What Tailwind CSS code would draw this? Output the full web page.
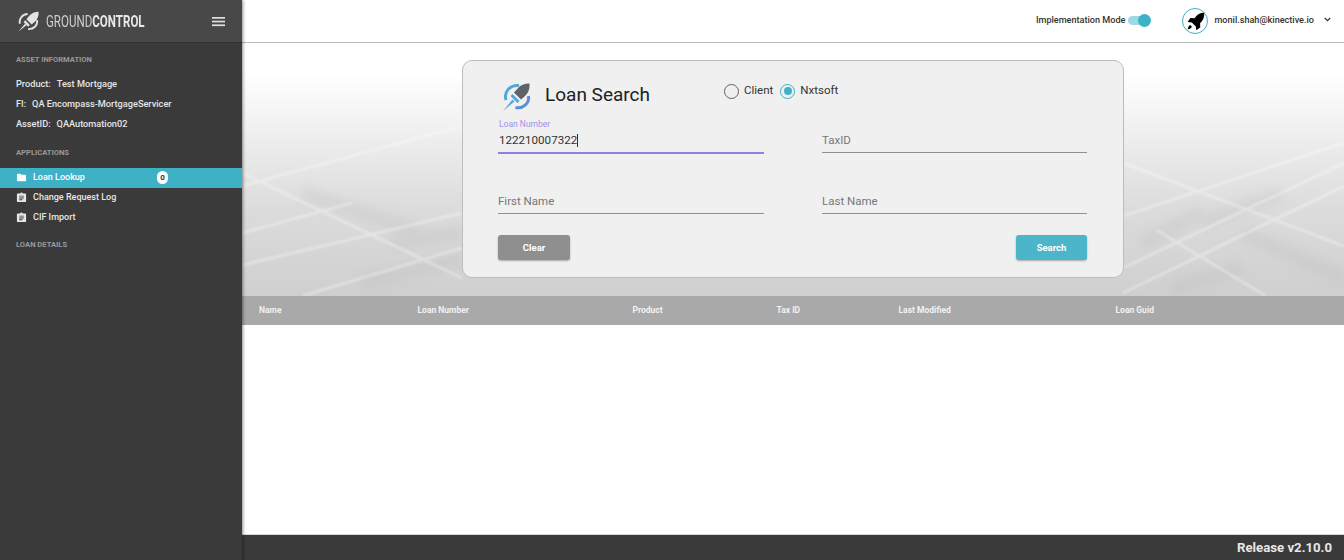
<!DOCTYPE html>
<html lang="en">
<head>
  <meta charset="UTF-8" />
  <title>Loan Search</title>
  <script src="https://cdn.jsdelivr.net/npm/@tailwindcss/browser@4"></script>
</head>
<body class="font-['Roboto',sans-serif] bg-white overflow-hidden">
<div class="flex h-[560px] w-[1344px]">

  <!-- Sidebar -->
  <aside class="w-[242px] shrink-0 bg-[#3a3a3a] text-[#e6e6e6] shadow-[1px_0_3px_rgba(0,0,0,0.45)] z-10">
    <div class="h-[43px] bg-[#484848] border-b border-[#303030] flex items-center pl-[18px] pr-[17px]">
      <svg class="w-[21px] h-[21px] mr-[7px] shrink-0" viewBox="0 0 24 24" fill="#e4e4e4">
        <path d="M23.5 .8c.3 4.600-1 8.600-4.300 11.600l-3.600 3-6-6 3-3.600C15.400 2.500 19.200 .8 23.500 .8z"/>
        <path d="M8.300 10.700 13.500 16l-1.900 1.900-5.300-5.300zM.5 23.500l7.500-8.800 1.600 1.600z"/>
        <path fill="none" stroke="#e4e4e4" stroke-width="2.200" d="M2.200 14.500C.8 9.300 4.800 3.700 11 3.500M21.800 10.500c1 6-4 10.700-10.300 10.200"/>
      </svg>
      <span class="block w-[100px] whitespace-nowrap origin-left scale-x-[0.68] text-[17px] text-[#cfcfcf] leading-none">GROUND<b class="font-bold text-[#e8e8e8]">CONTROL</b></span>
      <svg class="ml-auto w-[13px] h-[11px]" viewBox="0 0 13 11" fill="#e0e0e0">
        <rect y="1" width="13" height="1.700"/><rect y="4.700" width="13" height="1.700"/><rect y="8.400" width="13" height="1.700"/>
      </svg>
    </div>

    <p class="mt-[11px] pl-4 text-[7.600px] leading-[12px] font-bold text-[#999999]">ASSET INFORMATION</p>
    <div class="mt-[8px] pl-4 text-[9.200px] font-medium">
      <p class="h-5 leading-[20px]"><span class="mr-[6px]">Product:</span>Test Mortgage</p>
      <p class="h-5 leading-[20px]"><span class="mr-[6px]">FI:</span>QA Encompass-MortgageServicer</p>
      <p class="h-5 leading-[20px]"><span class="mr-[6px]">AssetID:</span>QAAutomation02</p>
    </div>

    <p class="mt-[13px] pl-4 text-[7.600px] leading-[12px] font-bold text-[#999999]">APPLICATIONS</p>
    <ul class="mt-[9px] text-[9px] font-medium">
      <li class="h-5 bg-[#3fb1c6] text-white flex items-center pl-4 relative">
        <svg class="w-[11px] h-[11px] mr-[6px] -mt-[2px]" viewBox="0 0 24 24" fill="#fff"><path d="M10 4H4a2 2 0 0 0-2 2v12a2 2 0 0 0 2 2h16a2 2 0 0 0 2-2V8a2 2 0 0 0-2-2h-8z"/></svg>
        Loan Lookup
        <span class="absolute left-[157px] top-[3px] w-[11px] h-[13px] rounded-full bg-white text-[#333] text-[8px] font-bold flex items-center justify-center">0</span>
      </li>
      <li class="h-5 flex items-center pl-4">
        <svg class="w-[11px] h-[11px] mr-[6px] -mt-[2px]" viewBox="0 0 24 24" fill="#e6e6e6"><path fill-rule="evenodd" d="M20 3h-5.200C14.400 1.800 13.300 1 12 1s-2.400.8-2.800 2H4a2 2 0 0 0-2 2v15a2 2 0 0 0 2 2h16a2 2 0 0 0 2-2V5a2 2 0 0 0-2-2zM7 8h10v2H7zm0 4h10v2H7zm0 4h7v2H7z"/></svg>
        Change Request Log
      </li>
      <li class="h-5 flex items-center pl-4">
        <svg class="w-[11px] h-[11px] mr-[6px] -mt-[2px]" viewBox="0 0 24 24" fill="#e6e6e6"><path fill-rule="evenodd" d="M20 3h-5.200C14.400 1.800 13.300 1 12 1s-2.400.8-2.800 2H4a2 2 0 0 0-2 2v15a2 2 0 0 0 2 2h16a2 2 0 0 0 2-2V5a2 2 0 0 0-2-2zM7 8h10v2H7zm0 4h10v2H7zm0 4h7v2H7z"/></svg>
        CIF Import
      </li>
    </ul>
    <p class="mt-[11px] pl-4 text-[7.600px] leading-[12px] font-bold text-[#999999]">LOAN DETAILS</p>
  </aside>

  <!-- Main -->
  <main class="flex-1 min-w-0 flex flex-col">
    <header class="h-[43px] bg-white border-b border-[#bdbdbd] flex items-center justify-end text-[9.100px] text-[#333] font-medium">
      <span>Implementation Mode</span>
      <span class="relative ml-[3px] w-[23px] h-[14px] mr-[31px] block">
        <span class="absolute left-0 top-[2px] w-[20px] h-[9px] rounded-full bg-[#9fd8e3]"></span>
        <span class="absolute right-0 top-0 w-[13px] h-[13px] rounded-full bg-[#3fb1c6]"></span>
      </span>
      <span class="w-[26px] h-[26px] rounded-full border border-[#3fb1c6] bg-white flex items-center justify-center mr-[6px]">
        <svg class="w-[19px] h-[19px]" viewBox="0 0 24 24" fill="#000">
          <path d="M23 1c.4 5.500-1.400 10-5.200 13.200l.2 5.300-5 3.500-.6-4.700-5-5L2 12.600l3.500-5 5.300.2C14 3 18 1.200 23 1z"/>
          <path d="M5.500 16.500c-1.800.8-2.800 2.500-3.500 5.500 3-.7 4.700-1.700 5.500-3.500z"/>
        </svg>
      </span>
      <span>monil.shah@kinective.io</span>
      <svg class="w-[7px] h-[5px] ml-[10px] mr-[13px] -mt-[3px]" viewBox="0 0 7 5" fill="none" stroke="#333" stroke-width="1.200"><path d="M.8 1l2.700 2.600L6.200 1"/></svg>
    </header>

    <!-- Hero with search card -->
    <section class="relative h-[253px] overflow-hidden flex justify-center items-start bg-[linear-gradient(180deg,#ffffff_0%,#ffffff_12%,#ececec_40%,#dcdcdc_65%,#cfcfcf_100%)]">
      <svg class="absolute inset-0 w-full h-full blur-[4px]" viewBox="0 0 1102 253" fill="none" stroke="#b4b4b4" stroke-opacity=".2" stroke-width="14">
        <path d="M60 150 180 190M120 240 220 215M150 200 220 190"/>
        <path d="M900 200 960 170M930 245 1000 225M1000 190 1102 235M960 180 1040 150"/>
      </svg>
      <svg class="absolute inset-0 w-full h-full blur-[1px]" viewBox="0 0 1102 253" fill="none" stroke="#ffffff" stroke-opacity=".32" stroke-width="3">
        <path d="M0 143 220 83M0 130 220 235M0 222 220 170M60 253 220 205M0 190 110 160"/>
        <path d="M881 173 1102 100M881 225 1102 120M881 120 1102 203M914 187 1024 253M881 250 1102 143"/>
      </svg>
      <div class="relative mt-[17px] w-[662px] h-[218px] bg-[#f0f0f0] border border-[#bdbdbd] rounded-[10px] pt-[18px] px-[35px]">
        <div class="flex items-start h-[40px]">
          <svg class="w-[30px] h-[30px] ml-[4px] mt-[3px]" viewBox="0 0 30 30">
            <path fill="none" stroke="#4fa8d8" stroke-width="3" d="M4 18C1.500 10 8 2.500 17 3.500"/>
            <path fill="none" stroke="#5b8fd6" stroke-width="3" d="M26.500 14c1 7.500-5.500 13-13 11.500"/>
            <path fill="#5f6368" d="M27.500 1.500c.4 5.500-1.300 10-5 13l-3.500 3-7-7 3.500-3.800C18.300 3 22.500 1.500 27.500 1.500z"/>
            <path fill="#4fa8d8" d="M1 29l9.500-11.500 2 2zM10.500 12l7 7-2 2-7-7z"/>
          </svg>
          <h1 class="ml-[13px] mt-[3px] text-[19px] leading-[26px] text-[#212121]">Loan Search</h1>
          <div class="ml-[74px] mt-[4px] flex items-center text-[11.500px] text-[#333] h-[16px]">
            <span class="w-[15px] h-[15px] rounded-full border-[1.500px] border-[#616161] mr-[5px]"></span>
            <span class="mr-[7px]">Client</span>
            <span class="w-[15px] h-[15px] rounded-full border-[1.500px] border-[#3fb1c6] mr-[5px] flex items-center justify-center"><span class="w-[8px] h-[8px] rounded-full bg-[#3fb1c6]"></span></span>
            <span>Nxtsoft</span>
          </div>
        </div>

        <div class="grid grid-cols-[266px_265px] gap-x-[58px]">
          <div class="h-[34px] border-b border-[#8c82e0] shadow-[0_1px_0_#8c82e0] pt-px">
            <p class="text-[8.500px] leading-[9px] text-[#9d93e6] pl-px">Loan Number</p>
            <p class="mt-[2px] pl-px text-[11.600px] leading-[18px] text-[#333] flex items-center">122210007322<span class="w-px h-[13px] bg-[#333]"></span></p>
          </div>
          <div class="h-[34px] border-b border-[#8f8f8f] pt-[12px] text-[11.500px] leading-[18px] text-[#777]">TaxID</div>
          <div class="mt-[27px] h-[34px] border-b border-[#8f8f8f] pt-[12px] text-[11.500px] leading-[18px] text-[#777]">First Name</div>
          <div class="mt-[27px] h-[34px] border-b border-[#8f8f8f] pt-[12px] text-[11.500px] leading-[18px] text-[#777]">Last Name</div>
        </div>

        <div class="mt-[21px] flex justify-between w-[589px]">
          <button class="w-[72px] h-[25px] pt-px rounded-[3px] bg-[#8f8f8f] text-white text-[9.500px] font-bold shadow-[0_1px_2px_rgba(0,0,0,0.3)]">Clear</button>
          <button class="w-[71px] h-[25px] pt-px rounded-[3px] bg-[#4db5c9] text-white text-[9.500px] font-bold shadow-[0_1px_2px_rgba(0,0,0,0.3)]">Search</button>
        </div>
      </div>
    </section>

    <!-- Results table header -->
    <div class="h-[29px] bg-[#a9a9a9] grid grid-cols-[158.500px_215px_144px_122px_217px_1fr] pl-[17px] items-center text-[8.500px] font-bold text-[#f2f2f2]">
      <span>Name</span><span>Loan Number</span><span>Product</span><span>Tax ID</span><span>Last Modified</span><span>Loan Guid</span>
    </div>
    <div class="flex-1 bg-white"></div>

    <footer class="h-[26px] bg-[#3a3a3a] border-t border-[#d8d8d8] flex items-center justify-end pr-[12px] text-[13.200px] font-bold text-[#e8e8e8]">Release v2.10.0</footer>
  </main>
</div>
</body>
</html>
